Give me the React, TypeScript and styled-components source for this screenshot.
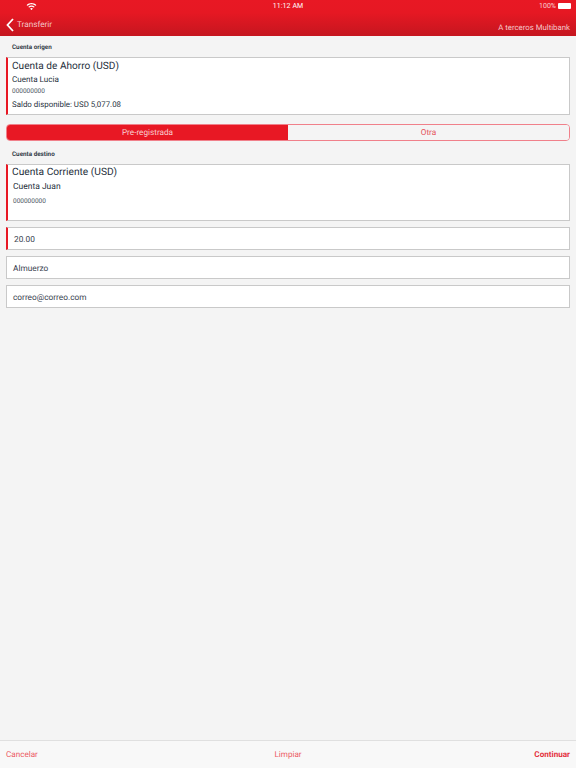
import React from 'react';
import styled, { createGlobalStyle } from 'styled-components';
import { IoIosWifi } from 'react-icons/io';

const Global = createGlobalStyle`
    html, body {
        margin: 0;
        padding: 0;
        background: #f4f4f4;
    }
    * {
        box-sizing: border-box;
    }
`;

const Page = styled.div`
    width: 576px;
    height: 768px;
    display: flex;
    flex-direction: column;
    background: #f4f4f4;
    font-family: "Roboto", "Liberation Sans", sans-serif;
    text-rendering: geometricPrecision;
    color: #26303c;
    overflow: hidden;
`;

const Header = styled.header`
    height: 36px;
    display: flex;
    flex-direction: column;
    background: linear-gradient(#e81824, #e61823 35%, #c5161f);
    color: #fff;
`;

const StatusBar = styled.div`
    height: 12px;
    display: grid;
    grid-template-columns: 1fr auto 1fr;
    align-items: center;
    padding: 0 5px 0 5px;
    font-size: 7px;
`;

const WifiSlot = styled.div`
    display: flex;
    align-items: center;
    padding-left: 21px;
`;

const Clock = styled.span`
    letter-spacing: 0.1px;
`;

const BatteryGroup = styled.div`
    display: flex;
    justify-content: flex-end;
    align-items: center;
    gap: 2px;
    color: #f8d4d6;
`;

const Battery = styled.span`
    width: 13px;
    height: 6px;
    background: #fff;
    border-radius: 1px;
`;

const NavBar = styled.div`
    flex: 1;
    display: flex;
    justify-content: space-between;
    padding: 0 6px;
    font-size: 7.8px;
    color: #f6c6c9;
`;

const BackLink = styled.div`
    display: flex;
    align-items: center;
    gap: 3px;
    padding-top: 2px;
    font-size: 8.2px;
`;

const NavTitle = styled.span`
    align-self: flex-end;
    padding-bottom: 3px;
    line-height: 10px;
`;

const Content = styled.main`
    flex: 1;
    display: flex;
    flex-direction: column;
    padding: 0 6px;
`;

const SectionLabel = styled.div<{ $top: number }>`
    margin: ${p => p.$top}px 0 6px 6px;
    font-size: 6.3px;
    line-height: 8px;
    font-weight: 700;
    color: #333c48;
`;

const Card = styled.div<{ $height: number }>`
    height: ${p => p.$height}px;
    background: #fff;
    border: 1px solid #c9c9c9;
    border-left: 2px solid #e81824;
`;

const CardRow = styled.div<{ $size: number; $top: number; $left?: number; $color?: string }>`
    height: 12px;
    margin-top: ${p => p.$top}px;
    margin-left: ${p => p.$left ?? 4}px;
    font-size: ${p => p.$size}px;
    line-height: 12px;
    color: ${p => p.$color ?? '#26303c'};
    white-space: nowrap;
`;

const Segments = styled.div`
    height: 17px;
    margin-top: 9px;
    display: grid;
    grid-template-columns: 1fr 1fr;
    border: 1px solid #f0808a;
    border-radius: 4px;
    overflow: hidden;
`;

const Segment = styled.div<{ $active?: boolean }>`
    display: flex;
    justify-content: center;
    align-items: center;
    font-size: 8.2px;
    background: ${p => p.$active ? '#e81824' : '#f4f4f4'};
    color: ${p => p.$active ? '#f9d0d3' : '#e4505a'};
`;

const Field = styled.div<{ $accent?: boolean }>`
    height: 23px;
    margin-top: 6px;
    display: flex;
    align-items: center;
    padding: 2px 0 0 6px;
    background: #fff;
    border: 1px solid #c9c9c9;
    border-left: ${p => p.$accent ? '2px solid #e81824' : '1px solid #c9c9c9'};
    font-size: 8.3px;
    color: #3a4350;
`;

const Footer = styled.footer`
    height: 28px;
    display: grid;
    grid-template-columns: 1fr auto 1fr;
    align-items: center;
    padding: 0 6px 2px;
    background: #f8f8f8;
    border-top: 1px solid #e0e0e0;
    font-size: 8.1px;
    color: #ec5a64;
`;

const FooterRight = styled.span`
    justify-self: end;
    font-weight: 700;
    color: #e4303c;
`;

function App() {
    return (
        <Page>
            <Global />
            <Header>
                <StatusBar>
                    <WifiSlot><IoIosWifi size={11} /></WifiSlot>
                    <Clock>11:12 AM</Clock>
                    <BatteryGroup>100%<Battery /></BatteryGroup>
                </StatusBar>
                <NavBar>
                    <BackLink>
                        <svg width="8" height="14" viewBox="0 0 8 14">
                            <path d="M7 1 L1.5 7 L7 13" fill="none" stroke="#fff" strokeWidth="1.8" />
                        </svg>
                        Transferir
                    </BackLink>
                    <NavTitle>A terceros Multibank</NavTitle>
                </NavBar>
            </Header>
            <Content>
                <SectionLabel $top={7}>Cuenta origen</SectionLabel>
                <Card $height={58}>
                    <CardRow $size={10.1} $top={3}>Cuenta de Ahorro (USD)</CardRow>
                    <CardRow $size={8.1} $top={0}>Cuenta Lucia</CardRow>
                    <CardRow $size={6.5} $top={0} $color="#4a525e">000000000</CardRow>
                    <CardRow $size={7.9} $top={2}>Saldo disponible: USD 5,077.08</CardRow>
                </Card>
                <Segments>
                    <Segment $active>Pre-registrada</Segment>
                    <Segment>Otra</Segment>
                </Segments>
                <SectionLabel $top={9}>Cuenta destino</SectionLabel>
                <Card $height={57}>
                    <CardRow $size={10.2} $top={2}>Cuenta Corriente (USD)</CardRow>
                    <CardRow $size={8.5} $top={2} $left={5}>Cuenta Juan</CardRow>
                    <CardRow $size={6.5} $top={2} $left={5} $color="#4a525e">000000000</CardRow>
                </Card>
                <Field $accent>20.00</Field>
                <Field>Almuerzo</Field>
                <Field>correo@correo.com</Field>
            </Content>
            <Footer>
                <span>Cancelar</span>
                <span>Limpiar</span>
                <FooterRight>Continuar</FooterRight>
            </Footer>
        </Page>
    );
}

export default App;
